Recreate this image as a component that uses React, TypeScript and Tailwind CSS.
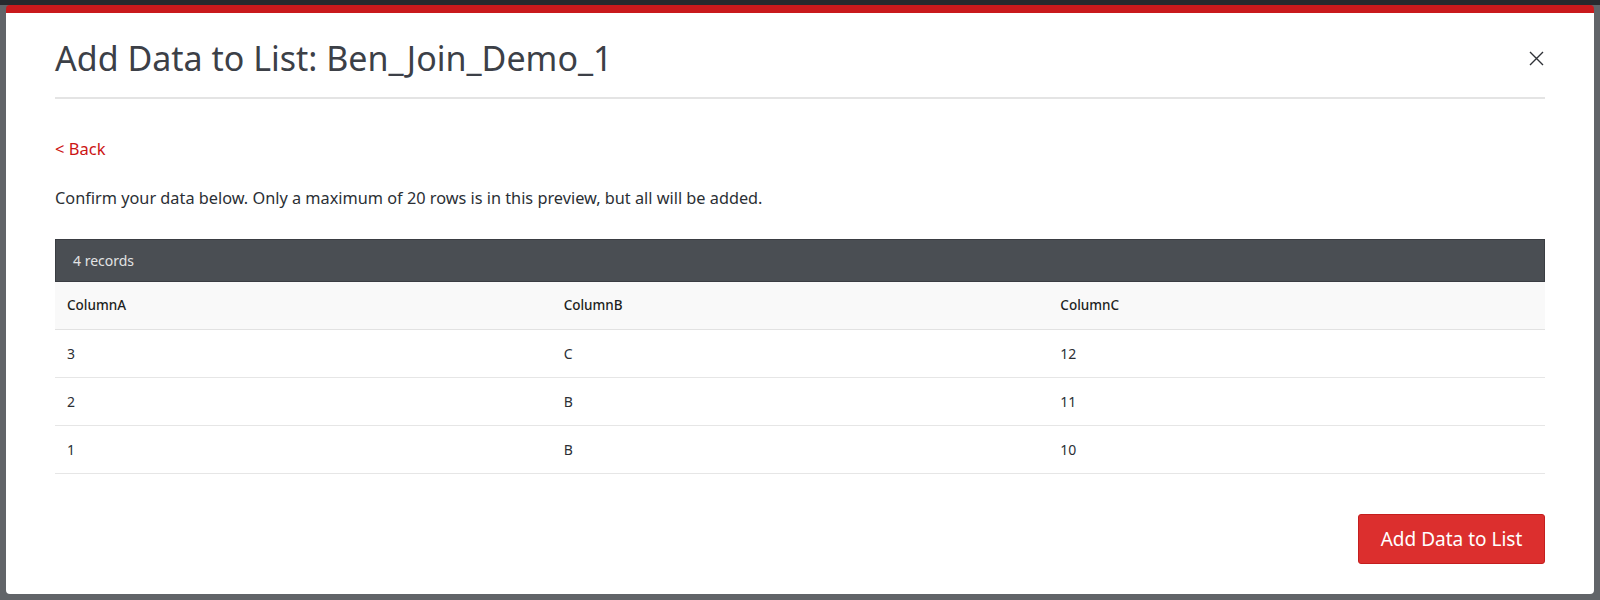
import React from "react";

const rows = [
  ["3", "C", "12"],
  ["2", "B", "11"],
  ["1", "B", "10"],
];

export default function App() {
  return (
    <div
      className="w-[1600px] h-[600px] bg-[#616468] flex flex-col overflow-hidden"
      style={{ fontFamily: '"Noto Sans", "Open Sans", Arial, sans-serif' }}
    >
      <div className="h-[5px] bg-[#27292d] shrink-0" />
      <div className="flex-1 px-[6px] pb-[6px] flex">
        <div className="flex-1 bg-white rounded-[4px] overflow-hidden flex flex-col border-t-[8px] border-[#c9191c]">
          <div className="mx-[49px] pt-[23px] pb-[17px] border-b-2 border-[#e4e4e4] flex items-center justify-between">
            <h1 className="text-[34px] leading-[44px] text-[#3c4047] font-normal">
              Add Data to List: Ben_Join_Demo_1
            </h1>
            <button className="w-[20px] h-[20px] flex items-center justify-center text-[#2f3237] -mr-[1px]">
              <svg width="15" height="15" viewBox="0 0 15 15" fill="none">
                <path d="M1 1L14 14M14 1L1 14" stroke="currentColor" strokeWidth="1.4" />
              </svg>
            </button>
          </div>
          <div className="px-[49px] flex flex-col">
            <a className="mt-[38px] text-[16.5px] leading-[24px] text-[#cc1414] cursor-pointer w-fit">
              &lt; Back
            </a>
            <p className="mt-[25px] text-[16.3px] leading-[24px] text-[#2b2f35]">
              Confirm your data below. Only a maximum of 20 rows is in this preview, but all will be added.
            </p>
            <div className="mt-[29px] flex flex-col">
              <div className="h-[43px] bg-[#4a4e53] border border-[#3a3d42] flex items-center px-[17px] text-[14px] text-[#e2e3e4]">
                4 records
              </div>
              <div className="grid grid-cols-3 h-[48px] bg-[#f9f9f9] border-b border-[#e2e2e2] items-center text-[13.5px] font-medium text-[#1d1f22]">
                <div className="px-[12px]">ColumnA</div>
                <div className="px-[12px]">ColumnB</div>
                <div className="px-[12px]">ColumnC</div>
              </div>
              {rows.map((r, i) => (
                <div
                  key={i}
                  className="grid grid-cols-3 h-[48px] border-b border-[#e6e6e6] items-center text-[14px] text-[#2b2f35]"
                >
                  {r.map((c, j) => (
                    <div key={j} className="px-[12px]">
                      {c}
                    </div>
                  ))}
                </div>
              ))}
            </div>
            <div className="mt-[40px] flex justify-end">
              <button className="h-[50px] w-[187px] rounded-[3px] bg-[#dc2f2e] border border-[#c41e1e] text-white text-[19px] flex items-center justify-center">
                Add Data to List
              </button>
            </div>
          </div>
        </div>
      </div>
    </div>
  );
}
